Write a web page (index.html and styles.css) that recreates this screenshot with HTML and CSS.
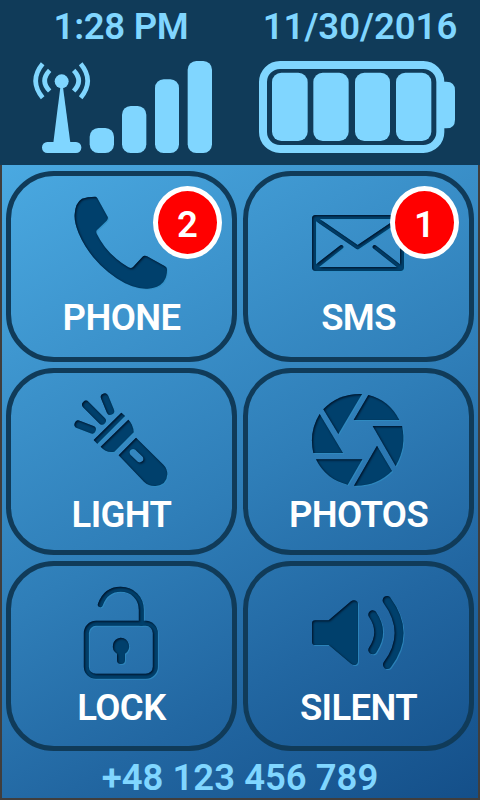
FILE: index.html
```
<!DOCTYPE html>
<html>
<head>
    <meta charset="utf-8">
    <title>Phone Launcher</title>
    <link rel="stylesheet" href="styles.css">
</head>
<body>

  <!-- carved look shared by all tile icons -->
  <svg class="defs">
    <filter id="carved" x="-10%" y="-10%" width="120%" height="120%" color-interpolation-filters="sRGB">
      <feOffset in="SourceAlpha" dx="0.6" dy="0.6" result="edge"/>
      <feFlood flood-color="#2f8fc4" flood-opacity="0.7"/>
      <feComposite in2="edge" operator="in" result="light"/>
      <feGaussianBlur in="SourceAlpha" stdDeviation="1"/>
      <feOffset dx="0.8" dy="1.2" result="moved"/>
      <feComposite in="SourceAlpha" in2="moved" operator="out" result="inner"/>
      <feFlood flood-color="#000a1c" flood-opacity="0.9"/>
      <feComposite in2="inner" operator="in" result="shadow"/>
      <feMerge>
        <feMergeNode in="light"/>
        <feMergeNode in="SourceGraphic"/>
        <feMergeNode in="shadow"/>
      </feMerge>
    </filter>
  </svg>

  <div class="status">
    <div class="status-item">
      <div class="text time">1:28 PM</div>
      <svg class="status-icon" viewBox="0 174 720 294">
        <g fill="none" stroke="#80d6ff" stroke-width="14">
          <path d="M128 191Q86 242 128 293"/>
          <path d="M149 211Q119 242 149 273"/>
          <path d="M242 191Q284 242 242 293"/>
          <path d="M221 211Q251 242 221 273"/>
        </g>
        <circle cx="185" cy="244" r="21"/>
        <path d="M181 262H189L211 428H160Z"/>
        <rect x="126" y="426" width="118" height="33" rx="16"/>
        <rect x="269" y="384" width="73" height="75" rx="26"/>
        <rect x="366" y="318" width="73" height="141" rx="26"/>
        <rect x="465" y="238" width="72" height="221" rx="26"/>
        <rect x="563" y="183" width="73" height="276" rx="26"/>
      </svg>
    </div>
    <div class="status-item">
      <div class="text">11/30/2016</div>
      <svg class="status-icon" viewBox="0 174 720 294">
        <rect x="69" y="195" width="532" height="252" rx="51" fill="none" stroke="#80d6ff" stroke-width="24"/>
        <path d="M608 245H619Q645 245 645 271V359Q645 385 619 385H608Z"/>
        <rect x="96" y="218" width="107" height="205" rx="28"/>
        <rect x="220" y="218" width="106" height="205" rx="28"/>
        <rect x="345" y="218" width="105" height="205" rx="28"/>
        <rect x="468" y="218" width="106" height="205" rx="28"/>
      </svg>
    </div>
  </div>

  <div class="screen">
    <div class="tiles">
      <div class="tile">
        <svg class="icon" viewBox="219 87 291 291">
          <path d="M246 101Q262 95 286 95Q290 96 292 100L323 156Q325 162 320 167L291 195Q287 199 290 206Q320 268 385 307Q394 312 400 305L427 276Q433 270 441 274L495 304Q502 308 501 316Q501 336 490 351Q475 369 443 371Q400 373 350 340Q270 285 236 205Q222 170 224 148Q226 113 246 101Z"/>
        </svg>
        <div class="label">PHONE</div>
        <div class="badge">2</div>
      </div>
      <div class="tile">
        <svg class="icon" viewBox="210 87 291 291">
          <g class="line">
            <rect x="222" y="156" width="264" height="156" rx="5"/>
            <path d="M226 160L353 247L482 160M226 307L304 246M482 307L404 246"/>
          </g>
        </svg>
        <div class="label">SMS</div>
        <div class="badge">1</div>
      </div>
      <div class="tile">
        <svg class="icon" viewBox="219 87 291 291">
          <g class="line rays">
            <path d="M314 106L331 147M258 128L306 176M235 187L276 203"/>
          </g>
          <path d="M364 152L375 162L292 245L281 234Z"/>
          <path d="M385 173Q400 188 401 211L343 269Q320 274 302 254Z"/>
          <path fill-rule="evenodd" d="M408 227L490 308Q502 320 502 337Q500 369 467 372Q447 373 432 359L356 280ZM392 264Q386 270 391 278L413 299Q420 304 427 298Q433 292 428 284L406 263Q399 258 392 264Z"/>
        </svg>
        <div class="label">LIGHT</div>
      </div>
      <div class="tile">
        <svg class="icon" viewBox="210 87 291 291">
          <path d="M366 96L295 216L250 142Q295 94 366 96Z"/>
          <path d="M385 99Q447 114 478 174H341Z"/>
          <path d="M398 192H486Q500 255 467 312Z"/>
          <path d="M411 251L456 327Q410 373 342 371Z"/>
          <path d="M228 292H367L323 368Q258 353 228 292Z"/>
          <path d="M239 156L309 273H220Q206 209 239 156Z"/>
        </svg>
        <div class="label">PHOTOS</div>
      </div>
      <div class="tile">
        <svg class="icon" viewBox="219 84 291 291">
          <g class="line lock">
            <path d="M301 146C312 115 334 100 362 100C398 100 424 126 424 162V202"/>
            <rect x="259" y="202" width="207" height="159" rx="29"/>
          </g>
          <path d="M362 245A26 26 0 0 1 375 293V312A12 12 0 0 1 351 312V293A26 26 0 0 1 362 245Z"/>
        </svg>
        <div class="label">LOCK</div>
      </div>
      <div class="tile">
        <svg class="icon" viewBox="210 84 291 291">
          <path d="M226 193H266L333 136Q341 130 348 134Q354 137 354 144V316Q354 323 348 326Q341 329 333 323L266 267H226Q216 267 216 257V203Q216 193 226 193Z"/>
          <g class="line waves">
            <path d="M398 176Q434 229 398 282M441 133Q513 231 442 326"/>
          </g>
        </svg>
        <div class="label">SILENT</div>
      </div>
    </div>
    <div class="text number">+48 123 456 789</div>
  </div>

</body>
</html>
```
FILE: styles.css
```
* {
    box-sizing: border-box;
}

body {
    margin: 0;
    width: 480px;
    height: 800px;
    overflow: hidden;
    font-family: Roboto, "Liberation Sans", sans-serif;
    font-size: 36.5px;
    font-weight: 600;
    line-height: 42px;
    letter-spacing: 0;
    background-color: #403e3d;
}

.defs {
    display: block;
    width: 0;
    height: 0;
}

/* Status bar */
.status {
    display: flex;
    height: 165px;
    background-color: #103b59;
}

.status-item {
    width: 240px;
    padding-top: 6px;
}

.text {
    color: #80d6ff;
    text-align: center;
    white-space: nowrap;
}

.time {
    padding-left: 2px;
    letter-spacing: -0.3px;
}

.status-icon {
    display: block;
    width: 240px;
    height: 98px;
    margin-top: 10px;
    fill: #80d6ff;
}

/* Main screen */
.screen {
    height: 633px;
    margin: 0 2px;
    padding: 6px 4px 0;
    background: linear-gradient(150deg, #4aa9e1 0%, #2f7eb8 50%, #2267a2 73%, #144f89 100%);
}

.tiles {
    display: grid;
    grid-template-columns: 231px 231px;
    grid-template-rows: 191px 187px 190px;
    gap: 6px;
}

.tile {
    position: relative;
    display: flex;
    flex-direction: column;
    align-items: center;
    padding-top: 18px;
    border: 5px solid #103b59;
    border-radius: 48px;
}

.icon {
    width: 97px;
    height: 97px;
    fill: #00406c;
    filter: url(#carved);
}

.line {
    fill: none;
    stroke: #00406c;
    stroke-width: 12;
    stroke-linecap: round;
    stroke-linejoin: round;
}

.rays {
    stroke-width: 23;
}

.lock {
    stroke-width: 15;
}

.waves {
    stroke-width: 26;
}

.label {
    margin-top: 6px;
    color: #fff;
    letter-spacing: -0.6px;
}

/* Unread counter */
.badge {
    position: absolute;
    top: 10px;
    right: 10px;
    width: 69px;
    height: 73px;
    padding-top: 13px;
    border: 5px solid #fff;
    border-radius: 50%;
    background-color: #f00;
    color: #fff;
    text-align: center;
}

.number {
    margin-top: 6px;
}
```
